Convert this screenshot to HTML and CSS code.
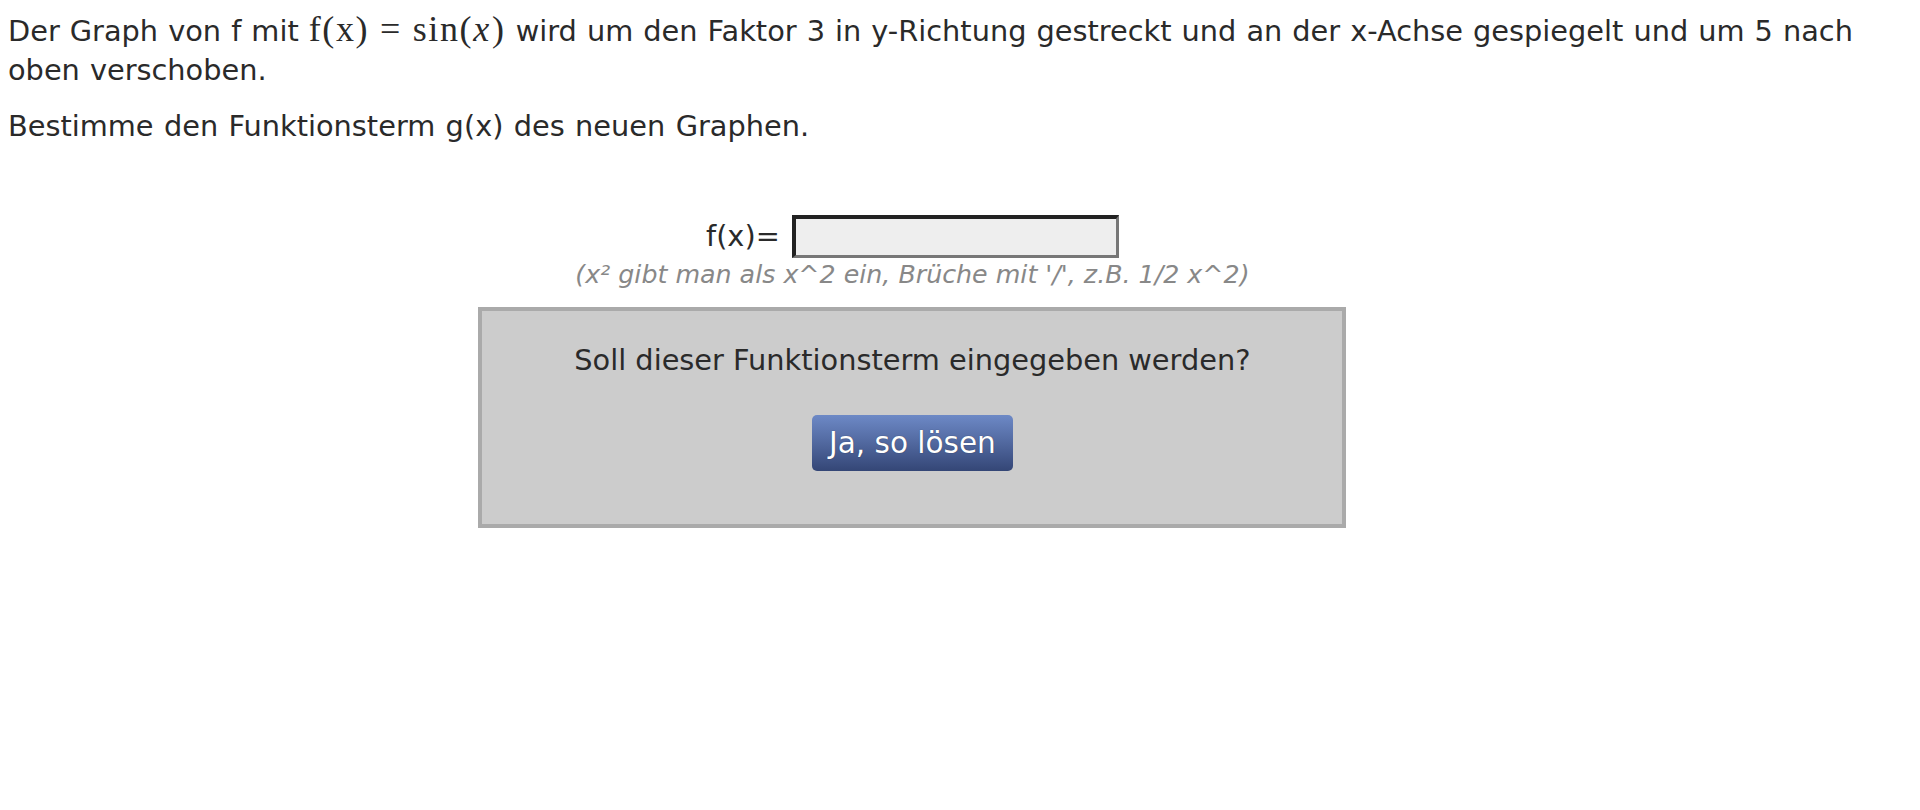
FILE: index.html
```html
<!DOCTYPE html>
<html lang="de">
<head>
<meta charset="utf-8">
<title>Funktionsterm</title>
<link rel="stylesheet" href="styles.css">
</head>
<body>
<div class="page">
  <p class="intro">Der Graph von f mit <span class="math">f(x)<span class="op">=</span>sin(<span class="it">x</span>)</span> wird um den Faktor 3 in y-Richtung gestreckt und an der x-Achse gespiegelt und um 5 nach oben verschoben.</p>
  <p class="task">Bestimme den Funktionsterm g(x) des neuen Graphen.</p>

  <div class="form">
    <div class="row">
      <label class="label" for="term">f(x)=</label>
      <input class="term" id="term" type="text">
    </div>
    <div class="hint">(x² gibt man als x^2 ein, Brüche mit '/', z.B. 1/2 x^2)</div>
    <div class="confirm">
      <p class="question">Soll dieser Funktionsterm eingegeben werden?</p>
      <button class="solve" type="button">Ja, so lösen</button>
    </div>
  </div>
</div>
</body>
</html>
```

FILE: styles.css
```css
html, body {
  background: #ffffff;
}

body {
  margin: 8px;
  font-family: "DejaVu Sans", Verdana, sans-serif;
  font-size: 28.8px;
  line-height: 39px;
  color: #2a2a2a;
}

.page {
  padding-top: 2px;
}

.intro {
  margin: 0 0 17px 0;
  word-spacing: 0.9px;
}

.task {
  margin: 0;
  word-spacing: 1.2px;
}

.math {
  font-family: "Liberation Serif", "Times New Roman", serif;
  font-size: 36px;
  letter-spacing: 0.045em;
  word-spacing: 0;
  white-space: nowrap;
}

.math .op {
  margin: 0 0.3em;
}

.math .it {
  font-style: italic;
  letter-spacing: 0.08em;
}

.form {
  width: 95%;
  margin-top: 69px;
  text-align: center;
}

.row {
  display: flex;
  justify-content: center;
  align-items: center;
  gap: 12px;
}

.label {
  line-height: 39px;
}

.term {
  box-sizing: border-box;
  width: 327px;
  height: 43px;
  margin: 0;
  padding: 0 6px;
  background: #eeeeee;
  border-style: solid;
  border-width: 4px 3px 3px 4px;
  border-color: #222222 #777777 #777777 #222222;
  font-family: "DejaVu Sans", Verdana, sans-serif;
  font-size: 24px;
  outline: none;
}

.hint {
  margin-top: 2px;
  font-size: 25.3px;
  line-height: 30px;
  font-style: italic;
  color: #888888;
}

.confirm {
  width: 860px;
  margin: 17px auto 0 auto;
  padding: 30px 0 53px 0;
  background: #cccccc;
  border: 4px solid #aaaaaa;
}

.question {
  margin: 0 0 35px 0;
}

.solve {
  box-sizing: border-box;
  height: 56px;
  padding: 10px 17px;
  border: 0;
  border-radius: 5px;
  background: linear-gradient(to bottom, #6d89c6 0%, #51689f 50%, #344676 100%);
  color: #ffffff;
  font-family: "DejaVu Sans", Verdana, sans-serif;
  font-size: 29.5px;
  line-height: 36px;
  text-shadow: 0 0 1px rgba(0, 0, 0, 0.5);
  cursor: pointer;
}
```
